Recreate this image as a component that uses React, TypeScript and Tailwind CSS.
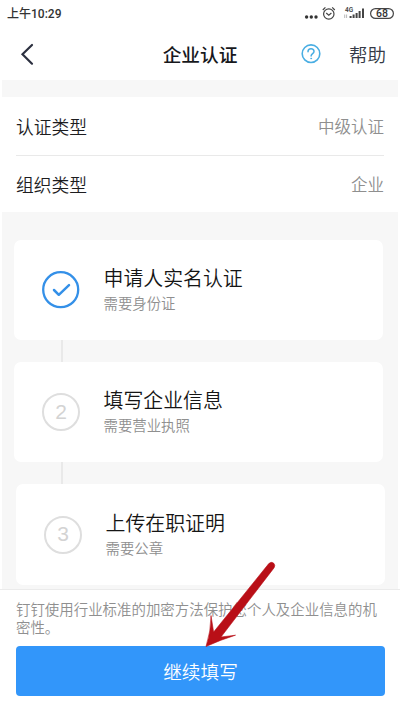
import React from 'react';

interface Step {
  title: string;
  hint: string;
  done?: boolean;
}

const STEPS: Step[] = [
  { title: '申请人实名认证', hint: '需要身份证', done: true },
  { title: '填写企业信息', hint: '需要营业执照' },
  { title: '上传在职证明', hint: '需要公章' },
];

const StatusBar = () => (
  <div className="flex h-7 items-center justify-between pl-[7px] pr-[6px] text-[#333]">
    <span className="text-[12px] leading-none font-medium font-['Roboto','Noto_Sans_CJK_SC',sans-serif]">上午10:29</span>
    <svg width="90" height="20" viewBox="304 4 90 20" fill="none" stroke="#444">
      <g fill="#333" stroke="none">
        <circle cx="306.6" cy="17" r="1.7" />
        <circle cx="311.3" cy="17" r="1.7" />
        <circle cx="316" cy="17" r="1.7" />
      </g>
      <circle cx="328.8" cy="14" r="5.2" strokeWidth="1.2" />
      <path d="M326.2 13l2.600 2.200 2.600-2.200M322.800 10l2.600-2.600M334.800 10l-2.600-2.600" strokeWidth="1.2" />
      <text x="345" y="12" fontSize="6.500" fontWeight="600" fill="#444" stroke="none" className="font-['Roboto',sans-serif]">4G</text>
      <path d="M344.700 18v-3.500M346.600 14.500v3.500" strokeWidth=".7" stroke="#999" />
      <path d="M350.600 18v-2M353.600 18v-3.500M356.600 18v-5M359.600 18v-7M363 18V8.500" strokeWidth="2" />
      <rect x="370.600" y="8.600" width="22.800" height="9.800" rx="4.900" strokeWidth="1.200" />
      <text x="382" y="17.300" textAnchor="middle" fontSize="10.500" fontWeight="500" fill="#333" stroke="none" className="font-['Roboto',sans-serif]">68</text>
    </svg>
  </div>
);

const Header = () => (
  <div className="grid h-[52px] grid-cols-[1fr_auto_1fr] items-center text-[#17181c]">
    <svg className="ml-[20px]" width="16" height="24" viewBox="0 0 16 24" fill="none" stroke="#2c3040" strokeWidth="2.200" strokeLinecap="round">
      <path d="M12 3L2.500 12.200l9.500 9.500" />
    </svg>
    <h1 className="text-[18.700px] leading-none font-medium">企业认证</h1>
    <div className="flex items-center justify-end pr-[14px]">
      <svg className="mr-[28px]" width="20" height="20" viewBox="0 0 20 20" fill="none" stroke="#4aaee3" strokeLinecap="round">
        <circle cx="10" cy="9.700" r="8.800" strokeWidth="1.600" />
        <path d="M7 7.700c0-1.900 1.300-3 3-3s3 1.200 3 2.800c0 2.100-2.900 2.300-2.900 4.500" strokeWidth="1.500" />
        <circle cx="10.100" cy="14.500" r=".5" strokeWidth=".9" />
      </svg>
      <span className="text-[18.500px] leading-none text-[#333845] font-[350]">帮助</span>
    </div>
  </div>
);

const InfoRow: React.FC<{ label: string; value: string }> = ({ label, value }) => (
  <div className="flex h-[57px] items-center justify-between font-[350]">
    <span className="text-[17.800px] text-[#1d1d1f]">{label}</span>
    <span className="text-[16.500px] text-[#8f8f8f]">{value}</span>
  </div>
);

const StepIcon: React.FC<{ index: number; done?: boolean }> = ({ index, done }) => {
  if (done) {
    return (
      <svg width="38" height="38" viewBox="0 0 38 38" fill="none" stroke="#3490e8">
        <circle cx="18.700" cy="18.700" r="17.500" strokeWidth="2.300" />
        <path d="M12 19l4.800 4.800L27 14.200" strokeWidth="2.500" strokeLinecap="round" strokeLinejoin="round" />
      </svg>
    );
  }
  return (
    <div className="flex size-[38px] items-center justify-center rounded-full border-2 border-[#dedede] pb-[2px] text-[21px] leading-none text-[#d3d3d3] font-['Liberation_Sans',sans-serif]">
      {index}
    </div>
  );
};

export default function App() {
  return (
    <div className="relative flex h-[711px] w-[400px] flex-col overflow-hidden bg-white font-['Noto_Sans_CJK_SC',sans-serif]">
      <StatusBar />
      <Header />

      <div className="mx-[2px] h-[17px] shrink-0 bg-[#f7f7f7]" />
      <section className="h-[115px] shrink-0 px-4 pt-px">
        <InfoRow label="认证类型" value="中级认证" />
        <div className="h-px bg-[#e9e9e9]" />
        <InfoRow label="组织类型" value="企业" />
      </section>

      <section className="mx-[2px] h-[377px] shrink-0 bg-[#f7f7f7] pt-[28px]">
        {STEPS.map((step, i) => (
          <React.Fragment key={step.title}>
            {i > 0 && <div className="ml-[59px] h-[22px] w-[1.500px] bg-[#e9e9e9]" />}
            <div className={`flex w-[369px] items-center rounded-[7px] bg-white pl-[28px] ${i === 2 ? 'ml-[14px] h-[101px]' : 'ml-[12px] h-[100px]'}`}>
              <StepIcon index={i + 1} done={step.done} />
              <div className="ml-[23.500px] pb-[2px] font-[350]">
                <div className="text-[19.900px] leading-[28px] text-[#151515]">{step.title}</div>
                <div className="text-[14.400px] leading-[22px] text-[#8f8f8f]">{step.hint}</div>
              </div>
            </div>
          </React.Fragment>
        ))}
      </section>

      <footer className="flex-1 border-t border-[#ebebeb] px-4 pt-[10px]">
        <p className="w-[368px] text-[14.450px] leading-[18px] text-[#8f8f8f] font-[350]">
          钉钉使用行业标准的加密方法保护您个人及企业信息的机密性。
        </p>
        <button className="mt-[10px] h-[50px] w-[369px] rounded-[4px] bg-[#3296fa] text-[18.700px] text-white font-[350]">继续填写</button>
      </footer>

      {/* pointer towards the submit button */}
      <svg className="pointer-events-none absolute top-[558px] left-[200px]" width="80" height="94" viewBox="200 558 80 94">
        <path d="M268.800 563.600Q271.500 561.300 273.800 563.300Q275.600 565.400 274 567.900L221 637L235.500 635.200Q220 640 206 646.500Q211 631 211 615.500L213.600 632Z" fill="#b90f17" stroke="#b90f17" strokeWidth=".6" />
      </svg>
    </div>
  );
}
